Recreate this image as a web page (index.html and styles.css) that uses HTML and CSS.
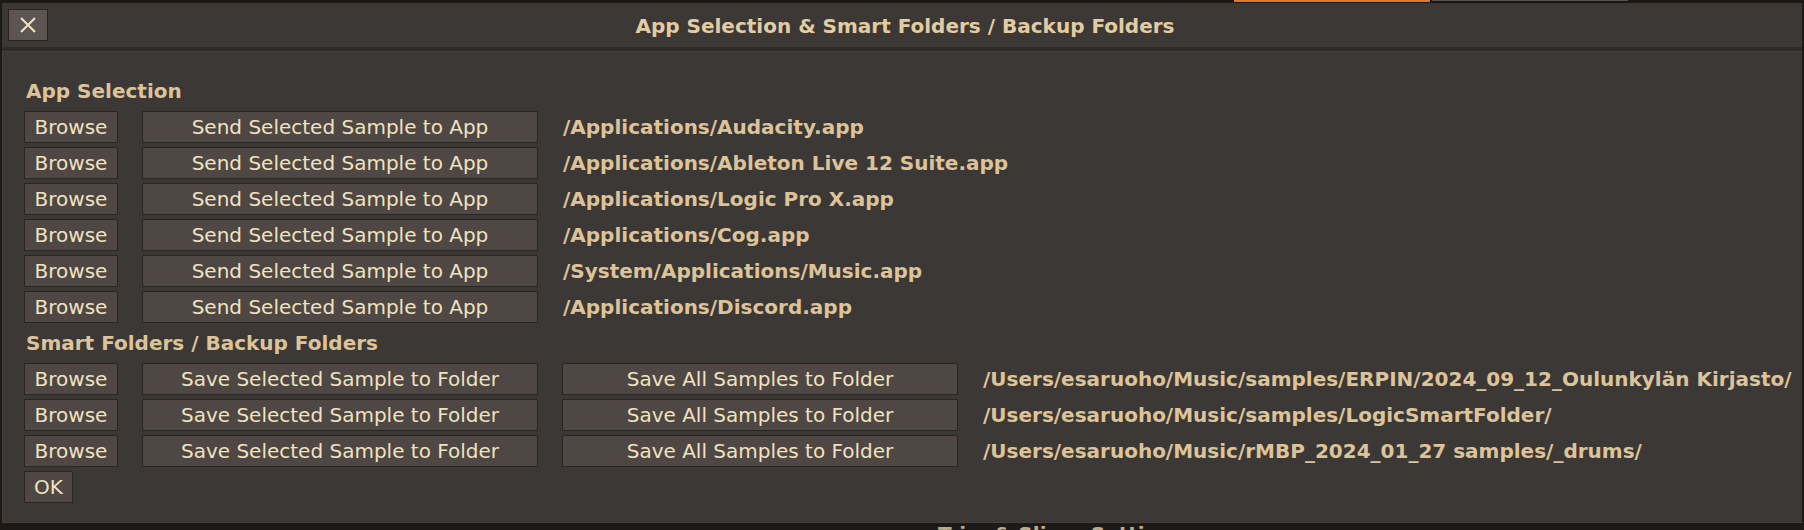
FILE: index.html
```html
<!DOCTYPE html>
<html>
<head>
<meta charset="utf-8">
<link rel="stylesheet" href="styles.css">
</head>
<body>
<div class="screen">
  <div class="behind-top">
    <span class="tab-spacer"></span>
    <span class="tab-line active"></span>
    <span class="tab-line"></span>
  </div>
  <div class="dialog">
    <div class="titlebar">
      <div class="tb-left">
        <button class="close-btn" aria-label="Close">
          <svg width="16" height="16" viewBox="0 0 16 16"><path d="M1 1 L15 15 M15 1 L1 15" stroke="#efe2c0" stroke-width="2" fill="none"/></svg>
        </button>
      </div>
      <div class="title">App Selection &amp; Smart Folders / Backup Folders</div>
      <div class="tb-right"></div>
    </div>
    <div class="separator"></div>
    <div class="panel">
      <div class="heading">App Selection</div>
      <div class="row"><button class="btn browse">Browse</button><button class="btn wide">Send Selected Sample to App</button><span class="path">/Applications/Audacity.app</span></div>
      <div class="row"><button class="btn browse">Browse</button><button class="btn wide">Send Selected Sample to App</button><span class="path">/Applications/Ableton Live 12 Suite.app</span></div>
      <div class="row"><button class="btn browse">Browse</button><button class="btn wide">Send Selected Sample to App</button><span class="path">/Applications/Logic Pro X.app</span></div>
      <div class="row"><button class="btn browse">Browse</button><button class="btn wide">Send Selected Sample to App</button><span class="path">/Applications/Cog.app</span></div>
      <div class="row"><button class="btn browse">Browse</button><button class="btn wide">Send Selected Sample to App</button><span class="path">/System/Applications/Music.app</span></div>
      <div class="row"><button class="btn browse">Browse</button><button class="btn wide">Send Selected Sample to App</button><span class="path">/Applications/Discord.app</span></div>
      <div class="heading">Smart Folders / Backup Folders</div>
      <div class="row"><button class="btn browse">Browse</button><button class="btn wide">Save Selected Sample to Folder</button><button class="btn wide">Save All Samples to Folder</button><span class="path">/Users/esaruoho/Music/samples/ERPIN/2024_09_12_Oulunkylän Kirjasto/</span></div>
      <div class="row"><button class="btn browse">Browse</button><button class="btn wide">Save Selected Sample to Folder</button><button class="btn wide">Save All Samples to Folder</button><span class="path">/Users/esaruoho/Music/samples/LogicSmartFolder/</span></div>
      <div class="row"><button class="btn browse">Browse</button><button class="btn wide">Save Selected Sample to Folder</button><button class="btn wide">Save All Samples to Folder</button><span class="path">/Users/esaruoho/Music/rMBP_2024_01_27 samples/_drums/</span></div>
      <div class="row"><button class="btn ok">OK</button></div>
    </div>
  </div>
  <div class="behind-bottom"><span class="behind-text">Trim &amp; Slices Settings</span></div>
</div>
</body>
</html>
```

FILE: styles.css
```css
* { box-sizing: border-box; }
html, body { margin: 0; padding: 0; }
body {
  background: #1c1a18;
  font-family: "DejaVu Sans", "Liberation Sans", sans-serif;
  width: 1804px;
  height: 530px;
  overflow: hidden;
}
.screen {
  display: flex;
  flex-direction: column;
  height: 530px;
}
.behind-top {
  height: 3px;
  display: flex;
  align-items: flex-start;
  background: #1a1816;
  flex: none;
}
.tab-spacer { width: 1234px; flex: none; }
.tab-line {
  width: 196px;
  height: 1px;
  background: #5a5450;
  margin-right: 2px;
  flex: none;
}
.tab-line.active { background: #e07a2e; height: 2px; }

.dialog {
  margin: 0 2px;
  height: 520px;
  display: flex;
  flex-direction: column;
  flex: none;
  background: #2e2b29;
}
.titlebar {
  height: 44px;
  background: #3c3835;
  display: grid;
  grid-template-columns: 1fr auto 1fr;
  align-items: center;
  padding-left: 6px;
  flex: none;
}
.close-btn {
  width: 40px;
  height: 32px;
  background: #5d5551;
  border: 1px solid #27231f;
  padding: 0;
  display: flex;
  align-items: center;
  justify-content: center;
}
.title {
  font-weight: bold;
  font-size: 20px;
  color: #e2cca3;
  line-height: 24px;
  padding-top: 2px;
}
.separator {
  height: 4px;
  background: #2e2b29;
  flex: none;
}
.panel {
  flex: 1;
  background: #3c3835;
  border: 1px solid #45403c;
  border-right-color: #3a3633;
  padding: 23px 0 0 21px;
  display: flex;
  flex-direction: column;
  gap: 4px;
}
.heading {
  height: 32px;
  line-height: 32px;
  font-size: 20px;
  font-weight: bold;
  color: #dcc39a;
  padding-left: 2px;
}
.row {
  height: 32px;
  display: flex;
  align-items: center;
  gap: 24px;
}
.btn {
  height: 32px;
  background: #4e4744;
  border: 1px solid #2a2624;
  color: #efe2c0;
  font-family: "DejaVu Sans", "Liberation Sans", sans-serif;
  font-size: 20px;
  padding: 0;
  line-height: 30px;
  text-align: center;
  flex: none;
}
.btn.browse { width: 94px; }
.btn.wide { width: 396px; }
.btn.ok { width: 49px; }
.path {
  font-size: 20px;
  font-weight: bold;
  color: #dcc39a;
  white-space: nowrap;
  padding-left: 1px;
}
.behind-bottom {
  height: 7px;
  overflow: hidden;
  background: #1c1a18;
  padding-left: 938px;
  flex: none;
}
.behind-text {
  display: block;
  font-size: 20px;
  font-weight: bold;
  line-height: 22px;
  color: #b9ab8e;
  white-space: nowrap;
  margin-top: 0;
}
```
